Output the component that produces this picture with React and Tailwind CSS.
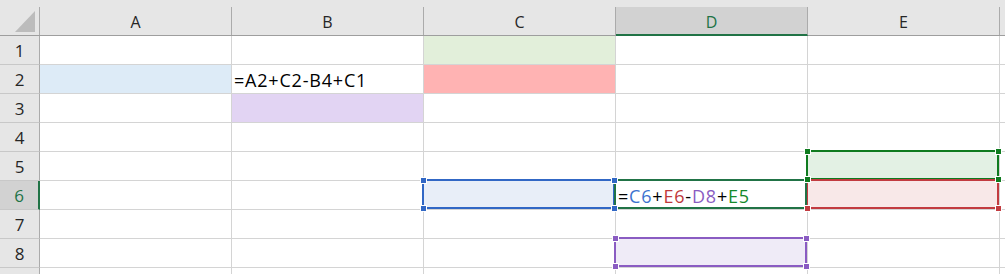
import React from 'react';

const COLS = ['A', 'B', 'C', 'D', 'E'];
const ROWS = [1, 2, 3, 4, 5, 6, 7, 8];

// cell fills
const FILLS = {
  A2: 'bg-[#ddebf7]',
  C1: 'bg-[#e2efda]',
  C2: 'bg-[#ffb3b3]',
  B3: 'bg-[#e2d4f3]',
  C6: 'bg-[#e8eef8]',
  E5: 'bg-[#e3f1e4]',
  E6: 'bg-[#f8e8e8]',
  D8: 'bg-[#efebf7]',
};

const REF_COLORS = {
  C6: 'text-[#3c72cf]',
  E6: 'text-[#c0393b]',
  D8: 'text-[#8a5cc2]',
  E5: 'text-[#148a2a]',
};

// outlines drawn over the gridlines of a cell, with their corner handles
const BOXES = {
  C6: { border: 'border-[#3167c5]', handle: 'bg-[#3167c5]', corners: ['tl', 'tr', 'bl', 'br'] },
  E5: { border: 'border-[#0f7b1f]', handle: 'bg-[#0f7b1f]', corners: ['tl', 'tr', 'bl', 'br'] },
  E6: { border: 'border-[#c23b40]', handle: 'bg-[#c23b40]', corners: ['bl', 'br'] },
  D8: { border: 'border-[#8a5cc2]', handle: 'bg-[#8a5cc2]', corners: ['tl', 'tr', 'bl', 'br'] },
  D6: { border: 'border-[#217346] z-10', handle: '', corners: [] },
};

const CORNER = {
  tl: '-left-[4px] -top-[4px]',
  tr: '-right-[5px] -top-[4px]',
  bl: '-left-[4px] -bottom-[5px]',
  br: '-right-[5px] -bottom-[5px]',
};

function Formula() {
  const parts = ['=', 'C6', '+', 'E6', '-', 'D8', '+', 'E5'];
  return (
    <span>
      {parts.map((p, i) => (
        <span key={i} className={REF_COLORS[p] || 'text-black'}>{p}</span>
      ))}
    </span>
  );
}

const CONTENT = {
  B2: <span>=A2+C2-B4+C1</span>,
  D6: <Formula />,
};

function Outline({ box }) {
  return (
    <div className={`absolute -left-[2px] -top-[2px] right-0 bottom-0 border-2 ${box.border}`}>
      {box.corners.map(c => (
        <div key={c} className={`absolute z-20 w-[7px] h-[7px] border border-white ${box.handle} ${CORNER[c]}`} />
      ))}
    </div>
  );
}

function Cell({ id }) {
  const box = BOXES[id];
  return (
    <div
      className={`flex items-center pl-[2px] pt-[3px] border-r border-b border-[#d4d4d4] text-[18px] tracking-[0.8px] text-black whitespace-nowrap ${
        box ? 'relative' : ''
      } ${FILLS[id] || ''}`}
    >
      {CONTENT[id]}
      {box && <Outline box={box} />}
    </div>
  );
}

export default function App() {
  return (
    <div className="w-[1005px] h-[274px] overflow-hidden bg-white" style={{ fontFamily: '"Open Sans", sans-serif' }}>
      <div className="grid grid-cols-[40px_repeat(5,192px)_1fr] grid-rows-[36px_repeat(8,29px)_1fr] h-full">
        {/* select-all corner */}
        <div className="bg-[#e6e6e6] pt-[7px] border-b border-[#9e9e9e]">
          <div className="h-[28px] border-r border-[#ababab] flex items-end justify-end pr-[4px] pb-[3px]">
            <div className="w-0 h-0 border-l-[20px] border-l-transparent border-b-[21px] border-b-[#bcbcbc]" />
          </div>
        </div>

        {COLS.map(c => {
          const sel = c === 'D';
          return (
            <div key={c} className={`bg-[#e6e6e6] pt-[7px] ${sel ? '' : 'border-b border-[#9e9e9e]'}`}>
              <div
                className={`flex items-center justify-center border-r border-[#ababab] text-[16px] ${
                  sel ? 'h-[29px] bg-[#d2d2d2] border-b-2 border-b-[#217346] text-[#217346]' : 'h-[28px] text-[#262626]'
                }`}
              >
                <span className="pt-[2px]">{c}</span>
              </div>
            </div>
          );
        })}
        <div className="bg-[#e6e6e6] pt-[7px] border-b border-[#9e9e9e]" />

        {ROWS.map(r => (
          <React.Fragment key={r}>
            <div
              className={`flex items-center justify-center border-b border-[#c8c8c8] text-[17px] ${
                r === 6
                  ? 'bg-[#d2d2d2] border-r-2 border-r-[#217346] text-[#217346]'
                  : 'bg-[#e6e6e6] border-r border-r-[#ababab] text-[#262626]'
              }`}
            >
              <span className="pt-[2px]">{r}</span>
            </div>
            {COLS.map(c => (
              <Cell key={c} id={`${c}${r}`} />
            ))}
            <div className="border-b border-[#d4d4d4]" />
          </React.Fragment>
        ))}

        <div className="bg-[#e6e6e6] border-r border-[#ababab]" />
        {COLS.map(c => (
          <div key={c} className="border-r border-[#d4d4d4]" />
        ))}
        <div />
      </div>
    </div>
  );
}
